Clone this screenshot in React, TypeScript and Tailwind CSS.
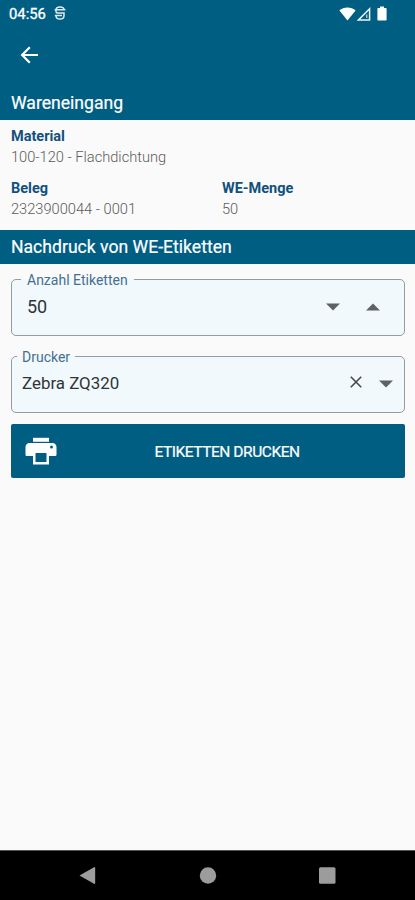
import type { ReactNode } from 'react';

const SectionTitle = ({ children }: { children: ReactNode }) => (
  <h2 className="flex h-[34.500px] items-center bg-[#005e83] px-[11px] pt-[3px] text-[17.600px] leading-none text-white [-webkit-text-stroke:0.2px_white]">
    {children}
  </h2>
);

const Info = ({ label, value }: { label: string; value: string }) => (
  <div className="h-[52px]">
    <p className="text-[14.500px] leading-5 font-bold text-[#12507d]">{label}</p>
    <p className="text-[14.650px] leading-5 font-light text-[#5c5c5c]">{value}</p>
  </div>
);

const Caret = ({ up = false }: { up?: boolean }) => (
  <svg width="14" height="8" viewBox="0 0 14 8" className="fill-[#5d6263]">
    <path d={up ? 'M0 7.500L7 .5l7 7z' : 'M0 .5h14l-7 7z'} />
  </svg>
);

const StatusBar = () => (
  <div className="flex h-[27px] items-center justify-between pr-[28px] pl-[9px] text-white">
    <div className="flex items-center gap-[8px]">
      <span className="mt-px text-[14.800px] leading-none [-webkit-text-stroke:0.3px_white]">04:56</span>
      <svg width="12" height="14" viewBox="0 0 12 14" fill="none" stroke="#dcebf3" strokeWidth="1.500">
        <path d="M10 3.800C10 2 8.400.9 6 .9S2 2 2 3.800v1.400C2 6.400 2.700 7 4 7h6v2.500c0 2.200-1.700 3.600-4 3.600s-4-1.400-4-3.600M.6 3.800h10.800M.8 9.600H8" />
      </svg>
    </div>
    <div className="flex items-center">
      <svg width="17" height="14" viewBox="0 0 17 14" fill="#fff">
        <path d="M8.500 13.600L.4 3.600C2.500 1.500 5.300.4 8.500.4s6 1.100 8.100 3.200z" />
      </svg>
      <svg width="14" height="14" viewBox="0 0 14 14" fill="none" stroke="#eaf3f8" strokeWidth="1.500" className="ml-px">
        <path d="M12.600 1.800v11.100H1.500z" />
        <path d="M9.800 7.500v3.500" strokeWidth="1" />
      </svg>
      <svg width="10" height="15" viewBox="0 0 10 15" fill="#fff" className="ml-[6px]">
        <path d="M3 .4h4v1.600h1.600c.6 0 1 .4 1 1v10.600c0 .6-.4 1-1 1H1.400c-.6 0-1-.4-1-1V3c0-.6.4-1 1-1H3z" />
      </svg>
    </div>
  </div>
);

export default function App() {
  return (
    <div className="flex h-[900px] w-[415px] flex-col overflow-hidden bg-[#fafafa] font-['Roboto',sans-serif]">
      <header className="h-[119.500px] bg-[#005e83]">
        <StatusBar />
        <div className="flex h-[58px] items-center pl-[20px]">
          <button aria-label="Zurück" className="-mt-[3px]">
            <svg width="19" height="18" viewBox="0 0 19 18" fill="none" stroke="#fff" strokeWidth="2.200">
              <path d="M18 9H2.500M9.800 1.300L2.100 9l7.700 7.700" />
            </svg>
          </button>
        </div>
        <SectionTitle>Wareneingang</SectionTitle>
      </header>

      <section className="h-[110px] px-[11px] pt-[7px]">
        <Info label="Material" value="100-120 - Flachdichtung" />
        <div className="grid grid-cols-[211px_1fr]">
          <Info label="Beleg" value="2323900044 - 0001" />
          <Info label="WE-Menge" value="50" />
        </div>
      </section>

      <SectionTitle>Nachdruck von WE-Etiketten</SectionTitle>

      <main className="flex-1 pt-[7px] pr-[10px] pl-[11px]">
        <fieldset className="h-[65px] rounded-[5px] border border-[#959c9e] bg-[#f1f9fc] pl-[9px]">
          <legend className="h-[17px] px-[6px] pt-px text-[14px] leading-[17px] text-[#456f91]">Anzahl Etiketten</legend>
          <div className="flex h-[37px] items-center pr-[24px] pl-[6px]">
            <span className="flex-1 text-[18px] text-[#303436]">50</span>
            <Caret />
            <span className="ml-[26px] flex">
              <Caret up />
            </span>
          </div>
        </fieldset>

        <fieldset className="mt-[12px] h-[65px] rounded-[5px] border border-[#959c9e] bg-[#f1f9fc] pl-[5px]">
          <legend className="h-[17px] px-[5px] pt-px text-[14px] leading-[17px] text-[#456f91]">Drucker</legend>
          <div className="flex h-[36px] items-center pr-[11px] pl-[5px]">
            <span className="flex-1 pt-px text-[16.900px] text-[#303436]">Zebra ZQ320</span>
            <svg width="12" height="12" viewBox="0 0 12 12" fill="none" stroke="#45494b" strokeWidth="1.600" className="-mt-[2px]">
              <path d="M.8.8l10.400 10.400M11.200.8L.8 11.200" />
            </svg>
            <span className="mt-[2px] ml-[17px] flex">
              <Caret />
            </span>
          </div>
        </fieldset>

        <button className="mt-[11px] flex h-[54px] w-full items-center rounded-[2px] bg-[#005e83] pl-[14px] text-white">
          <svg width="32" height="28" viewBox="0 0 32 28" fill="#fff">
            <path d="M8 .8h16v4H8z" />
            <path
              fillRule="evenodd"
              d="M4.500 6h23c2.300 0 4 1.700 4 4v7.500c0 1-.6 1.500-1.500 1.500h-6v8.500H8V19H2c-.9 0-1.500-.5-1.500-1.500V10c0-2.300 1.700-4 4-4zM10.500 16v9h11v-9zM26.500 8.500a1.500 1.500 0 100 3 1.500 1.500 0 000-3z"
            />
          </svg>
          <span className="flex-1 pt-[3px] pr-[8px] text-center text-[15.500px] tracking-[-0.45px] [-webkit-text-stroke:0.2px_white]">
            ETIKETTEN DRUCKEN
          </span>
        </button>
      </main>

      <nav className="flex h-[50px] items-center border-t border-[#555] bg-black">
        <svg width="415" height="20" viewBox="0 0 415 20" fill="#9c9c9c">
          <path d="M79.500 9.500L94 1.300q1.200-.6 1.200.6v15.200q0 1.200-1.200.6z" />
          <circle cx="208" cy="9.500" r="8.200" />
          <rect x="319" y="1.300" width="16.500" height="16.500" rx="1.500" />
        </svg>
      </nav>
    </div>
  );
}
